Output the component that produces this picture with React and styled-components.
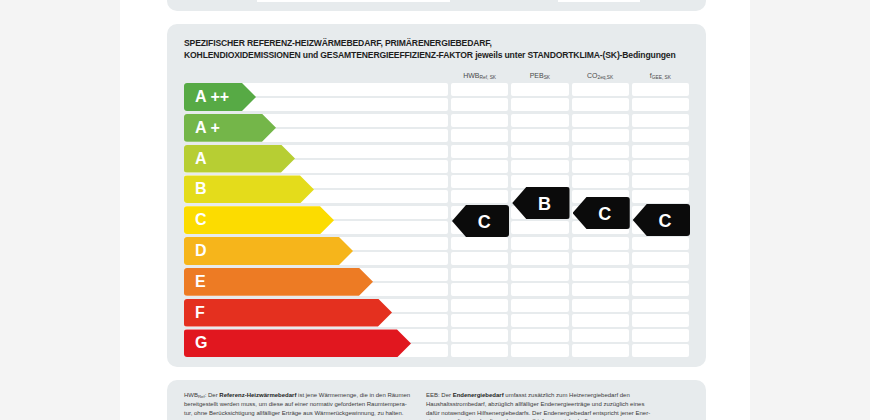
import styled, { createGlobalStyle } from "styled-components"

const GlobalStyle = createGlobalStyle`
  html, body {
    margin: 0;
    padding: 0;
    background: #f4f4f4;
  }
  * { box-sizing: border-box; }
`

const narrow = `"Liberation Sans Narrow", "Liberation Sans", Arial, sans-serif`

const Sheet = styled.div`
  width: 630px;
  height: 100vh;
  margin: 0 auto;
  background: #ffffff;
  padding: 0 44px 0 47px;
  display: flex;
  flex-direction: column;
  gap: 13px;
  overflow: hidden;
  & > * { flex-shrink: 0; }
`
const TopCard = styled.div`
  height: 11px;
  background: #e7ebed;
  border-radius: 0 0 10px 10px;
  display: flex;
  gap: 108px;
  padding-left: 90px;
`
const TopStub = styled.div`
  width: ${p => p.$w}px;
  height: 1.5px;
  background: #ffffff;
`
const Card = styled.div`
  background: #e7ebed;
  border-radius: 10px;
  padding: 13px 17px 10px;
`
const Title = styled.h2`
  margin: 0;
  font-family: ${narrow};
  font-weight: 700;
  font-size: 8.6px;
  line-height: 12px;
  letter-spacing: -0.15px;
  color: #1e1e1e;
`
const Chart = styled.div`
  display: grid;
  grid-template-columns: 264px repeat(4, 1fr);
  column-gap: 3px;
`
const Column = styled.div`
  display: flex;
  flex-direction: column;
  gap: 2px;
`
const ColHead = styled.div`
  height: 20px;
  display: flex;
  align-items: flex-end;
  justify-content: center;
  font-family: ${narrow};
  font-size: 7px;
  line-height: 10px;
  color: #4a4a4a;
  sub {
    font-size: 4.8px;
    vertical-align: -1px;
    line-height: 0;
  }
`
const Stack = styled.div`
  position: relative;
  display: flex;
  flex-direction: column;
  gap: 2.8px;
`
const Row = styled.div`
  display: grid;
  height: 28px;
  & > * { grid-area: 1 / 1; }
`
const Bars = styled.div`
  display: flex;
  flex-direction: column;
  gap: 2px;
`
const Bar = styled.div`
  height: 13px;
  background: #ffffff;
  border-radius: 2px;
`
const Arrow = styled.div`
  width: ${p => p.$w}px;
  height: 28px;
  background: ${p => p.$color};
  border-radius: 3px;
  clip-path: polygon(0 0, calc(100% - 14px) 0, 100% 50%, calc(100% - 14px) 100%, 0 100%);
  display: flex;
  align-items: center;
  padding-left: 11px;
  font-family: "Liberation Sans", Arial, sans-serif;
  font-weight: 700;
  font-size: 16px;
  color: #ffffff;
  white-space: pre;
`
const Marker = styled.div`
  position: absolute;
  left: 1px;
  right: -1px;
  top: ${p => p.$top}px;
  height: 32px;
  background: #0b0b0b;
  border-radius: 3px;
  clip-path: polygon(14px 0, 100% 0, 100% 100%, 14px 100%, 0 50%);
  display: flex;
  align-items: center;
  justify-content: center;
  padding-left: 7px;
  padding-top: 2px;
  font-family: "Liberation Sans", Arial, sans-serif;
  font-weight: 700;
  font-size: 18px;
  color: #ffffff;
`
const InfoCard = styled.div`
  flex: 1 0 auto;
  background: #e7ebed;
  border-radius: 10px 10px 0 0;
  padding: 11px 17px 0;
  display: grid;
  grid-template-columns: 228px 1fr;
  column-gap: 14px;
`
const InfoText = styled.p`
  margin: 0;
  font-family: ${narrow};
  font-size: 6px;
  line-height: 8.7px;
  white-space: nowrap;
  color: #3a3a3a;
  b { color: #1e1e1e; }
  sub {
    font-size: 4.3px;
    vertical-align: -1px;
    line-height: 0;
  }
`

const ratings = [
  { label: "A ++", color: "#57aa45", w: 72 },
  { label: "A +", color: "#74b649", w: 92 },
  { label: "A", color: "#b7ce33", w: 111 },
  { label: "B", color: "#e4dc1b", w: 130 },
  { label: "C", color: "#fcdc00", w: 150 },
  { label: "D", color: "#f6b51b", w: 169 },
  { label: "E", color: "#ed7b24", w: 189 },
  { label: "F", color: "#e4301f", w: 208 },
  { label: "G", color: "#e1171f", w: 227 },
]

const columns = [
  { head: "HWB", sub: "Ref, SK", mark: "C", top: 122 },
  { head: "PEB", sub: "SK", mark: "B", top: 104 },
  { head: "CO", sub: "2eq,SK", mark: "C", top: 114 },
  { head: "f", sub: "GEE, SK", mark: "C", top: 121 },
]

const EmptyCell = () => (
  <Row>
    <Bars>
      <Bar />
      <Bar />
    </Bars>
  </Row>
)

const App = () => {
  return (
    <>
      <GlobalStyle />
      <Sheet>
        <TopCard>
          <TopStub $w={193} />
          <TopStub $w={82} />
        </TopCard>
        <Card>
          <Title>
            SPEZIFISCHER REFERENZ-HEIZWÄRMEBEDARF, PRIMÄRENERGIEBEDARF,<br />
            KOHLENDIOXIDEMISSIONEN und GESAMTENERGIEEFFIZIENZ-FAKTOR jeweils unter STANDORTKLIMA-(SK)-Bedingungen
          </Title>
          <Chart>
            <Column>
              <ColHead />
              <Stack>
                {ratings.map(r => (
                  <Row key={r.label}>
                    <Bars>
                      <Bar />
                      <Bar />
                    </Bars>
                    <Arrow $w={r.w} $color={r.color}>{r.label}</Arrow>
                  </Row>
                ))}
              </Stack>
            </Column>
            {columns.map(c => (
              <Column key={c.head}>
                <ColHead>
                  <span>{c.head}<sub>{c.sub}</sub></span>
                </ColHead>
                <Stack>
                  {ratings.map(r => <EmptyCell key={r.label} />)}
                  <Marker $top={c.top}>{c.mark}</Marker>
                </Stack>
              </Column>
            ))}
          </Chart>
        </Card>
        <InfoCard>
          <InfoText>
            HWB<sub>Ref</sub>: Der <b>Referenz-Heizwärmebedarf</b> ist jene Wärmemenge, die in den Räumen<br />
            bereitgestellt werden muss, um diese auf einer normativ geforderten Raumtempera-<br />
            tur, ohne Berücksichtigung allfälliger Erträge aus Wärmerückgewinnung, zu halten.
          </InfoText>
          <InfoText>
            EEB: Der <b>Endenergiebedarf</b> umfasst zusätzlich zum Heizenergiebedarf den<br />
            Haushaltsstrombedarf, abzüglich allfälliger Endenergieerträge und zuzüglich eines<br />
            dafür notwendigen Hilfsenergiebedarfs. Der Endenergiebedarf entspricht jener Ener-<br />
            giemenge, die eingekauft werden muss (Lieferenergiebedarf).
          </InfoText>
        </InfoCard>
      </Sheet>
    </>
  )
}

export default App
